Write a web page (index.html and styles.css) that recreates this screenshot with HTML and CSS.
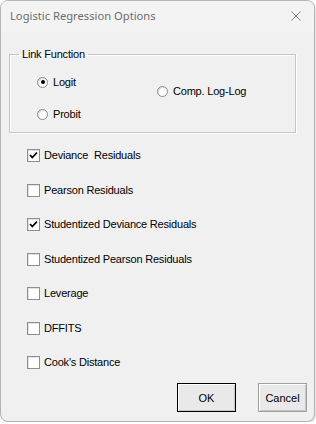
FILE: index.html
```html
<!DOCTYPE html>
<html lang="en">
<head>
  <meta charset="UTF-8" />
  <title>Logistic Regression Options</title>
  <link rel="stylesheet" href="styles.css">
</head>
<body>
  <div class="dialog">
    <div class="title-bar">
      <span class="title">Logistic Regression Options</span>
      <svg class="close-icon" viewBox="0 0 10 10" xmlns="http://www.w3.org/2000/svg">
        <path d="M0.5 0.5 L9.5 9.5 M9.5 0.5 L0.5 9.5" />
      </svg>
    </div>

    <div class="dialog-body">
      <fieldset class="group">
        <legend>Link Function</legend>
        <div class="radio-grid">
          <label class="radio logit"><span class="radio-dot checked"></span>Logit</label>
          <label class="radio cloglog"><span class="radio-dot"></span>Comp. Log-Log</label>
          <label class="radio probit"><span class="radio-dot"></span>Probit</label>
        </div>
      </fieldset>

      <div class="check-list">
        <label class="check"><span class="box checked"><svg viewBox="0 0 11 11"><path d="M2 5 L4.3 7.5 L9 2.5" /></svg></span>Deviance&nbsp; Residuals</label>
        <label class="check"><span class="box"></span>Pearson Residuals</label>
        <label class="check"><span class="box checked"><svg viewBox="0 0 11 11"><path d="M2 5 L4.3 7.5 L9 2.5" /></svg></span>Studentized Deviance Residuals</label>
        <label class="check"><span class="box"></span>Studentized Pearson Residuals</label>
        <label class="check"><span class="box"></span>Leverage</label>
        <label class="check"><span class="box"></span>DFFITS</label>
        <label class="check"><span class="box"></span>Cook's Distance</label>
      </div>

      <div class="buttons">
        <button class="btn default">OK</button>
        <button class="btn">Cancel</button>
      </div>
    </div>
  </div>
</body>
</html>
```

FILE: styles.css
```css
* {
  box-sizing: border-box;
  margin: 0;
  padding: 0;
}
body {
  background: #ffffff;
  font-family: 'Liberation Sans', Arial, sans-serif;
  font-size: 11px;
  letter-spacing: -0.2px;
  color: #000;
}
.dialog {
  width: 315px;
  height: 422px;
  border: 1px solid #b4b4b4;
  border-radius: 8px;
  background: #f0f0f0;
  overflow: hidden;
  box-shadow: 1px 1px 2px rgba(0, 0, 0, 0.15);
}
.title-bar {
  height: 31px;
  background: #f3f3f3;
  display: flex;
  align-items: center;
  justify-content: space-between;
  padding: 0 9px 2px 9px;
}
.title {
  font-family: 'Noto Sans', sans-serif;
  font-size: 11.2px;
  letter-spacing: 0;
  color: #6d6d6d;
}
.close-icon {
  width: 10px;
  height: 10px;
  stroke: #7a7a7a;
  stroke-width: 1;
  fill: none;
  margin-right: 4px;
}
.dialog-body {
  padding: 0 7px 0 8px;
}
.group {
  margin-top: 15px;
  width: 287px;
  height: 86px;
  border: 1px solid #c4c4c4;
  box-shadow: inset 1px 1px 0 #fff, 1px 1px 0 #fff;
  padding: 0;
}
.group legend {
  margin-left: 9px;
  padding: 1px 3px 0 3px;
  line-height: 13px;
  color: #000;
}
.radio-grid {
  display: grid;
  grid-template-columns: 120px auto;
  grid-template-rows: 32px auto;
  padding: 15px 0 0 27px;
}
.radio {
  display: flex;
  align-items: center;
  align-self: start;
  gap: 5px;
  line-height: 12px;
}
.logit { grid-column: 1; grid-row: 1; }
.probit { grid-column: 1; grid-row: 2; }
.cloglog { grid-column: 2; grid-row: 1 / 3; margin-top: 9px; }
.radio-dot {
  width: 11px;
  height: 11px;
  border-radius: 50%;
  background: #fff;
  border: 1px solid #8a8a8a;
  box-shadow: inset 1px 1px 0 #dcdcdc;
  display: flex;
  align-items: center;
  justify-content: center;
}
.radio-dot.checked::after {
  content: "";
  width: 4px;
  height: 4px;
  border-radius: 50%;
  background: #000;
}
.check-list {
  display: flex;
  flex-direction: column;
  gap: 21.5px;
  margin-top: 16px;
  padding-left: 18px;
}
.check {
  display: flex;
  align-items: center;
  gap: 4px;
  height: 13px;
  line-height: 13px;
}
.box {
  width: 13px;
  height: 13px;
  background: #fff;
  border: 1px solid #8f8f8f;
  box-shadow: inset 1px 1px 0 #e3e3e3;
  display: flex;
  align-items: center;
  justify-content: center;
}
.box svg {
  width: 11px;
  height: 11px;
  fill: none;
  stroke: #000;
  stroke-width: 1.8;
}
.buttons {
  display: flex;
  justify-content: flex-end;
  gap: 22px;
  margin-top: 14px;
}
.btn {
  font-family: 'Liberation Sans', Arial, sans-serif;
  font-size: 11px;
  letter-spacing: 0;
  height: 29px;
  width: 49px;
  background: #e9e9e9;
  border: 1px solid #a0a0a0;
  box-shadow: inset 1px 1px 0 #fff, inset -1px -1px 0 #c6c6c6;
  color: #000;
}
.btn.default {
  width: 59px;
  border: 1px solid #000;
}
```
